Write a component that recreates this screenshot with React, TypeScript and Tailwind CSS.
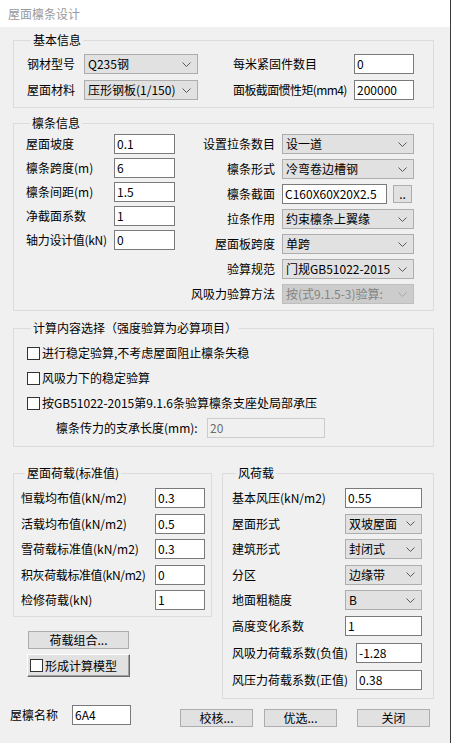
import React from "react";

const Chevron = ({ color = "#5a5a5a" }: { color?: string }) => (
  <svg width="9" height="5" viewBox="0 0 9 5" className="shrink-0">
    <polyline points="0.5,0.5 4.5,4.5 8.5,0.5" fill="none" stroke={color} strokeWidth="1" />
  </svg>
);

function Select({ value, w, disabled }: { value: string; w: string; disabled?: boolean }) {
  return (
    <div
      className={`${w} h-[20px] shrink-0 flex items-center justify-between pl-[3px] pr-[6px] border overflow-hidden ${
        disabled ? "bg-[#cccccc] border-[#bfbfbf] text-[#838383]" : "bg-[#e1e1e1] border-[#adadad] text-black"
      }`}
    >
      <span className="whitespace-nowrap overflow-hidden leading-[18px]">{value}</span>
      <Chevron color={disabled ? "#a8a8a8" : "#5a5a5a"} />
    </div>
  );
}

function Input({ value, w, disabled }: { value: string; w: string; disabled?: boolean }) {
  return (
    <div
      className={`${w} h-[20px] shrink-0 flex items-center pl-[2px] border overflow-hidden whitespace-nowrap leading-[18px] ${
        disabled ? "bg-[#f0f0f0] border-[#cccccc] text-[#6d6d6d]" : "bg-white border-[#7a7a7a] text-black"
      }`}
    >
      {value}
    </div>
  );
}

function Btn({ label, className }: { label: string; className: string }) {
  return (
    <div
      className={`${className} shrink-0 flex items-center justify-center bg-[#e1e1e1] border border-[#adadad] leading-[16px] whitespace-nowrap`}
    >
      {label}
    </div>
  );
}

function Check() {
  return <div className="w-[13px] h-[13px] shrink-0 bg-white border border-[#333333]" />;
}

function Group({ title, className, children }: { title: string; className: string; children: React.ReactNode }) {
  return (
    <fieldset className={`border border-[#dcdcdc] min-w-0 shrink-0 ${className}`}>
      <legend className="ml-[4px] px-[2px] text-[12px] leading-[14px] whitespace-nowrap">{title}</legend>
      {children}
    </fieldset>
  );
}

function Row({ children, className = "" }: { children: React.ReactNode; className?: string }) {
  return <div className={`flex items-center h-[20px] ${className}`}>{children}</div>;
}

function Lbl({ text, w, right, cls = "" }: { text: string; w: string; right?: boolean; cls?: string }) {
  return (
    <div className={`${w} shrink-0 whitespace-nowrap leading-[20px] ${right ? "text-right" : ""} ${cls}`}>{text}</div>
  );
}

export default function App() {
  return (
    <div className="w-[451px] h-[743px] bg-[#f0f0f0] flex flex-col border-r border-[#3c3c3c] text-[12px] text-black font-['Noto_Sans_CJK_SC',sans-serif] overflow-hidden">
      {/* title bar */}
      <div className="h-[27px] shrink-0 bg-white pl-[8px] flex items-center text-[12px] text-[#9a9a9a]">屋面檩条设计</div>

      {/* 基本信息 */}
      <Group title="基本信息" className="mt-[6px] ml-[13px] w-[421px] pl-[13px] pt-[7px] pb-[7px]">
        <div className="flex flex-col gap-[6px]">
          <Row>
            <Lbl text="钢材型号" w="w-[57px]" />
            <Select value="Q235钢" w="w-[114px]" />
            <div className="w-[35px] shrink-0" />
            <Lbl text="每米紧固件数目" w="w-[121px]" />
            <Input value="0" w="w-[60px]" />
          </Row>
          <Row>
            <Lbl text="屋面材料" w="w-[57px]" />
            <Select value="压形钢板(1/150)" w="w-[114px]" />
            <div className="w-[35px] shrink-0" />
            <Lbl text="面板截面惯性矩(mm4)" w="w-[121px]" cls="tracking-[-0.6px]" />
            <Input value="200000" w="w-[60px]" />
          </Row>
        </div>
      </Group>

      {/* 檩条信息 */}
      <Group title="檩条信息" className="mt-[8px] ml-[13px] w-[421px] pl-[12px] pt-[4px] pb-[6px]">
        <div className="flex">
          <div className="flex flex-col gap-[4px]">
            <Row>
              <Lbl text="屋面坡度" w="w-[88px]" />
              <Input value="0.1" w="w-[61px]" />
            </Row>
            <Row>
              <Lbl text="檩条跨度(m)" w="w-[88px]" />
              <Input value="6" w="w-[61px]" />
            </Row>
            <Row>
              <Lbl text="檩条间距(m)" w="w-[88px]" />
              <Input value="1.5" w="w-[61px]" />
            </Row>
            <Row>
              <Lbl text="净截面系数" w="w-[88px]" />
              <Input value="1" w="w-[61px]" />
            </Row>
            <Row>
              <Lbl text="轴力设计值(kN)" w="w-[88px]" cls="tracking-[-0.3px]" />
              <Input value="0" w="w-[61px]" />
            </Row>
          </div>
          <div className="flex flex-col gap-[5px]">
            <Row>
              <Lbl text="设置拉条数目" w="w-[100px]" right />
              <div className="w-[7px] shrink-0" />
              <Select value="设一道" w="w-[132px]" />
            </Row>
            <Row>
              <Lbl text="檩条形式" w="w-[100px]" right />
              <div className="w-[7px] shrink-0" />
              <Select value="冷弯卷边槽钢" w="w-[132px]" />
            </Row>
            <Row>
              <Lbl text="檩条截面" w="w-[100px]" right />
              <div className="w-[7px] shrink-0" />
              <Input value="C160X60X20X2.5" w="w-[105px]" />
              <div className="w-[6px] shrink-0" />
              <Btn label=".." className="w-[19px] h-[18px]" />
            </Row>
            <Row>
              <Lbl text="拉条作用" w="w-[100px]" right />
              <div className="w-[7px] shrink-0" />
              <Select value="约束檩条上翼缘" w="w-[132px]" />
            </Row>
            <Row>
              <Lbl text="屋面板跨度" w="w-[100px]" right />
              <div className="w-[7px] shrink-0" />
              <Select value="单跨" w="w-[132px]" />
            </Row>
            <Row>
              <Lbl text="验算规范" w="w-[100px]" right />
              <div className="w-[7px] shrink-0" />
              <Select value="门规GB51022-2015" w="w-[132px]" />
            </Row>
            <Row>
              <Lbl text="风吸力验算方法" w="w-[100px]" right />
              <div className="w-[7px] shrink-0" />
              <Select value="按(式9.1.5-3)验算:" w="w-[132px]" disabled />
            </Row>
          </div>
        </div>
      </Group>

      {/* 计算内容选择 */}
      <Group
        title="计算内容选择（强度验算为必算项目）"
        className="mt-[10px] ml-[13px] w-[421px] pl-[13px] pt-[8px] pb-[8px]"
      >
        <div className="flex flex-col gap-[5px]">
          <Row className="gap-[2px]">
            <Check />
            <span className="whitespace-nowrap">进行稳定验算,不考虑屋面阻止檩条失稳</span>
          </Row>
          <Row className="gap-[2px]">
            <Check />
            <span className="whitespace-nowrap">风吸力下的稳定验算</span>
          </Row>
          <Row className="gap-[2px]">
            <Check />
            <span className="whitespace-nowrap">按GB51022-2015第9.1.6条验算檩条支座处局部承压</span>
          </Row>
          <Row>
            <div className="w-[29px] shrink-0" />
            <Lbl text="檩条传力的支承长度(mm):" w="w-[151px]" />
            <Input value="20" w="w-[118px]" disabled />
          </Row>
        </div>
      </Group>

      {/* load groups */}
      <div className="flex mt-[19px] ml-[13px] shrink-0">
        <div className="flex flex-col w-[199px] shrink-0">
          <Group title="屋面荷载(标准值)" className="w-[199px] pl-[7px] pt-[8px] pb-[6px]">
            <div className="flex flex-col gap-[5.5px]">
              <Row>
                <Lbl text="恒载均布值(kN/m2)" w="w-[134px]" />
                <Input value="0.3" w="w-[50px]" />
              </Row>
              <Row>
                <Lbl text="活载均布值(kN/m2)" w="w-[134px]" />
                <Input value="0.5" w="w-[50px]" />
              </Row>
              <Row>
                <Lbl text="雪荷载标准值(kN/m2)" w="w-[134px]" />
                <Input value="0.3" w="w-[50px]" />
              </Row>
              <Row>
                <Lbl text="积灰荷载标准值(kN/m2)" w="w-[134px]" cls="tracking-[-0.4px]" />
                <Input value="0" w="w-[50px]" />
              </Row>
              <Row>
                <Lbl text="检修荷载(kN)" w="w-[134px]" />
                <Input value="1" w="w-[50px]" />
              </Row>
            </div>
          </Group>
          <Btn label="荷载组合..." className="mt-[14px] ml-[15px] w-[101px] h-[18px]" />
          <div className="mt-[5px] ml-[14px] w-[103px] h-[23px] flex items-center gap-[2px] pl-[2px] bg-[#e1e1e1] border border-t-white border-l-white border-r-[#696969] border-b-[#696969] shadow-[inset_-1px_-1px_0_#a0a0a0]">
            <Check />
            <span className="whitespace-nowrap leading-[20px]">形成计算模型</span>
          </div>
        </div>

        <Group title="风荷载" className="ml-[10px] w-[212px] pl-[9px] pt-[8px] pb-[8px]">
          <div className="flex flex-col gap-[5.5px]">
            <Row>
              <Lbl text="基本风压(kN/m2)" w="w-[113px]" />
              <Input value="0.55" w="w-[77px]" />
            </Row>
            <Row>
              <Lbl text="屋面形式" w="w-[113px]" />
              <Select value="双坡屋面" w="w-[77px]" />
            </Row>
            <Row>
              <Lbl text="建筑形式" w="w-[113px]" />
              <Select value="封闭式" w="w-[77px]" />
            </Row>
            <Row>
              <Lbl text="分区" w="w-[113px]" />
              <Select value="边缘带" w="w-[77px]" />
            </Row>
            <Row>
              <Lbl text="地面粗糙度" w="w-[113px]" />
              <Select value="B" w="w-[77px]" />
            </Row>
            <Row>
              <Lbl text="高度变化系数" w="w-[113px]" />
              <Input value="1" w="w-[77px]" />
            </Row>
            <Row className="mt-[1.5px]">
              <Lbl text="风吸力荷载系数(负值)" w="w-[124px]" />
              <Input value="-1.28" w="w-[66px]" />
            </Row>
            <Row className="mt-[1.5px]">
              <Lbl text="风压力荷载系数(正值)" w="w-[124px]" />
              <Input value="0.38" w="w-[66px]" />
            </Row>
          </div>
        </Group>
      </div>

      {/* bottom row */}
      <div className="flex items-start mt-[6px] pl-[10px] shrink-0">
        <Lbl text="屋檩名称" w="w-[62px]" />
        <Input value="6A4" w="w-[59px]" />
        <Btn label="校核..." className="ml-[49px] mt-[4px] w-[73px] h-[18px]" />
        <Btn label="优选..." className="ml-[11px] mt-[4px] w-[73px] h-[18px]" />
        <Btn label="关闭" className="ml-[20px] mt-[4px] w-[73px] h-[18px]" />
      </div>
    </div>
  );
}
